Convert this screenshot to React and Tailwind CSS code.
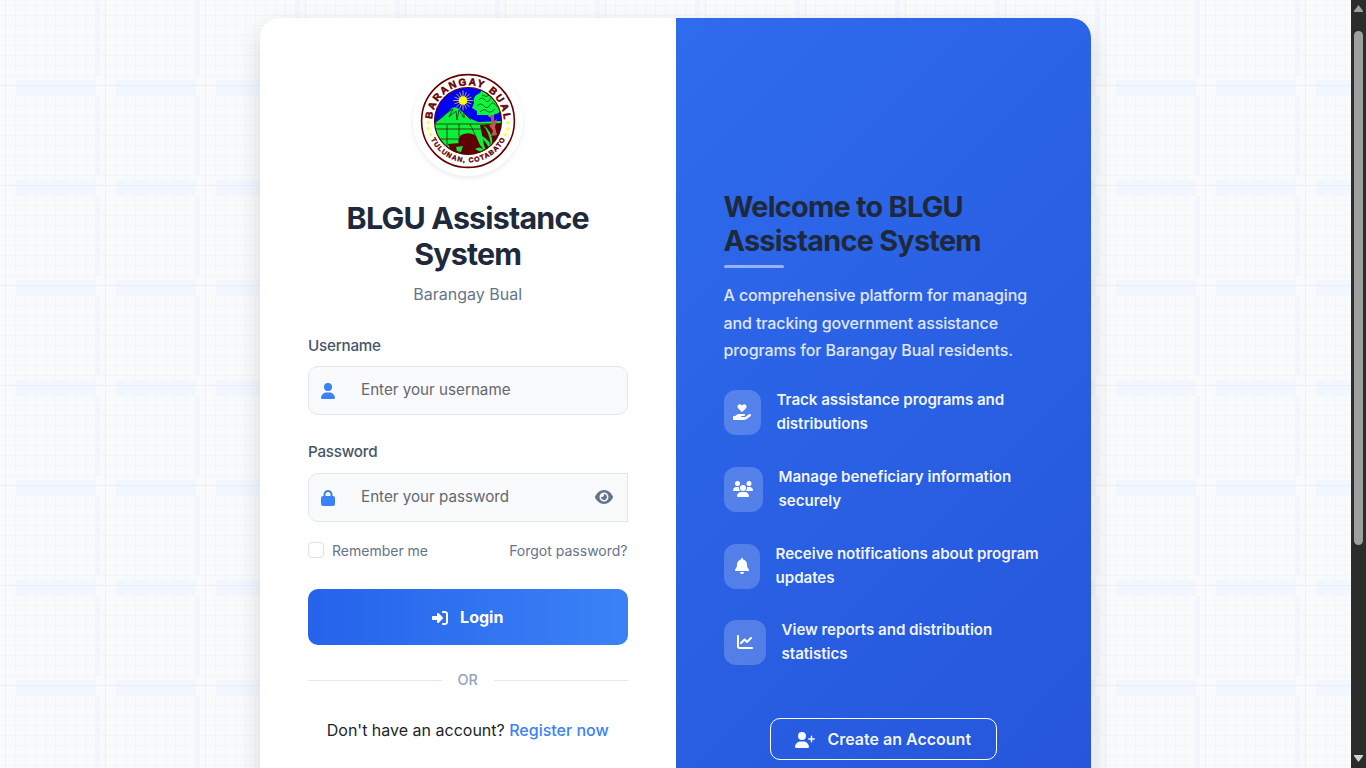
import {
  FaUser, FaLock, FaEye, FaRightToBracket, FaHandHoldingHeart, FaUsers, FaBell, FaChartLine, FaUserPlus,
} from "react-icons/fa6";

const features = [
  { Icon: FaHandHoldingHeart, box: "w-[37px]", icon: "w-[18px]", pitch: "h-[77px]", lines: ["Track assistance programs and", "distributions"] },
  { Icon: FaUsers, box: "w-[39px]", icon: "w-5", pitch: "h-[77px]", lines: ["Manage beneficiary information", "securely"] },
  { Icon: FaBell, box: "w-9", icon: "w-3.5", pitch: "h-[76px]", lines: ["Receive notifications about program", "updates"] },
  { Icon: FaChartLine, box: "w-[42px]", icon: "w-4", pitch: "h-12", lines: ["View reports and distribution", "statistics"] },
];

const MINOR = [15, 25, 35, 45, 55, 65, 75, 85, 95];

function GridBackground() {
  return (
    <svg className="absolute inset-0 h-full w-full" aria-hidden="true" shapeRendering="crispEdges">
      <defs>
        <pattern id="grid" width="100" height="100" patternUnits="userSpaceOnUse">
          <rect width="100" height="100" fill="#f9fafc" />
          {[5, ...MINOR].map((v) => (
            <g key={v} fill="#f3f5f9">
              <rect x={v} y="0" width="1" height="100" />
              <rect x="0" y={v} width="100" height="1" />
            </g>
          ))}
          <rect x="96" y="0" width="4" height="100" fill="#f2f5fd" />
          <rect x="0" y="76" width="16" height="20" fill="#f9fafc" />
          <rect x="96" y="76" width="4" height="20" fill="#f9fafc" />
          <rect x="16" y="80" width="80" height="16" fill="#f2f6fe" />
          <rect x="5" y="0" width="1" height="100" fill="#eeeffa" />
          <rect x="0" y="85" width="100" height="1" fill="#ebeefa" />
        </pattern>
      </defs>
      <rect width="100%" height="100%" fill="url(#grid)" />
    </svg>
  );
}

function Star({ x, y }) {
  return <path transform={`translate(${x} ${y})`} d="M0-2.4 .7-.7 2.4-.6 1.1.5 1.5 2.2 0 1.3-1.5 2.2-1.1.5-2.4-.6-.7-.7Z" fill="#ffff2a" />;
}

function Seal() {
  return (
    <svg viewBox="0 0 96 96" className="h-24 w-24" role="img" aria-label="Barangay Bual seal">
      <defs>
        <clipPath id="disc"><circle cx="48" cy="48" r="33.5" /></clipPath>
        <path id="arcTop" d="M12.2 48A35.8 35.8 0 0 1 83.8 48" />
        <path id="arcBottom" d="M6.6 48A41.4 41.4 0 0 0 89.4 48" />
      </defs>
      <circle cx="48" cy="48" r="46.4" fill="#fff" stroke="#650000" strokeWidth="1.6" />
      <g clipPath="url(#disc)">
        <rect width="96" height="96" fill="#0000f4" />
        <path d="M14 51 23 44 32 35Q36 33 39 36L49 45 58 49 82 48V84H14Z" fill="#0bf03b" />
        <path d="M14 50 25 41 33 36 29 44 36 38 37 47 39 37 44 45 44 40 51 47" fill="none" stroke="#153c22" strokeWidth=".9" />
        <path d="M13 51H84M14 56H70M14 66H44M27 52V80M39 51V64M14 75H38M50 51 56 64" fill="none" stroke="#3d1a00" strokeWidth=".8" />
        <path d="M60 52 82 50V75L68 83 64 72Z" fill="#590000" />
        <path d="M40 84 39 72Q37 66 41 62 50 58 56 63L60 72 70 84Z" fill="#600000" />
        <path d="M28 71 40 70 43 78 38 80 34 84Z" fill="#600000" />
        <path d="M36 74 43 73 41 79 37 78Z" fill="#0bea38" />
        <path d="M71 82Q69 70 57 61 67 64 71 72 69 59 63 52 74 59 72 75 77 68 83 67 74 72 73 82ZM55 76Q62 71 68 82 60 79 55 76" fill="#0aee35" />
        <path d="M54 30Q52 23 60 20 61 15 69 18 76 17 78 24 82 27 79 34 82 41 75 41 73 43 72 44H69L68 42 57 42 57 38 52 35Z" fill="#0ef53b" />
        <path d="M70 42H74L74 48 77 46 75 54 77 62 71 63 73 58 69 52 72 51Z" fill="#bd5858" />
        <path d="M59 27q3-4 6 0t6-2 6 3M57 33q4-4 7 0t6-1 7 2M60 39q4-4 7-1t8-2M62 22q4 3 8 0" fill="none" stroke="#126b35" strokeWidth="1" />
        <path d="M43 18v19M33.5 27.5h19M36.8 21.3l12.4 12.4M49.2 21.3 36.8 33.7M39.8 19.6l6.4 15.8M35 24.3l16 6.4M35 30.7l16-6.4M39.8 35.4l6.4-15.8" stroke="#e6dc50" strokeWidth=".8" strokeLinecap="round" />
        <circle cx="43" cy="27.5" r="4.3" fill="#ffff13" />
      </g>
      <circle cx="48" cy="48" r="33.5" fill="none" stroke="#650000" strokeWidth="1.2" />
      <g fill="#650000" className="font-['Liberation_Sans',sans-serif] font-bold">
        <text fontSize="10" textLength="109" lengthAdjust="spacing" stroke="#650000" strokeWidth=".5"><textPath href="#arcTop" startOffset="1.8">BARANGAY BUAL</textPath></text>
        <text fontSize="6.9" textLength="92" lengthAdjust="spacing" stroke="#650000" strokeWidth=".35"><textPath href="#arcBottom" startOffset="19">TULUNAN, COTABATO</textPath></text>
      </g>
      <Star x="8.2" y="49.5" /><Star x="8.2" y="55.5" /><Star x="10.7" y="61.5" />
      <Star x="87.8" y="49.5" /><Star x="87.8" y="55.5" /><Star x="85.3" y="61.5" />
    </svg>
  );
}

function LoginPanel() {
  return (
    <section className="flex w-1/2 flex-col items-stretch bg-white px-12 pt-12">
      <div className="flex h-[110px] w-[110px] items-center justify-center self-center rounded-full bg-white shadow-[0_2px_5px_rgba(0,0,0,0.08)]">
        <Seal />
      </div>
      <h1 className="mt-6 text-center text-[30.4px] leading-9 font-bold tracking-[-0.026em] text-[#1e293b]">BLGU Assistance<br />System</h1>
      <p className="mt-2.5 text-center text-base leading-6 text-[#64748b]">Barangay Bual</p>

      <label className="mt-7 text-[15.2px] leading-6 font-medium tracking-[-0.015em] text-[#475569]">Username</label>
      <div className="mt-2 flex h-[49px] items-center rounded-[10px] border border-[#e2e8f0] bg-[#f8fafc] pl-3">
        <FaUser className="mt-px h-4 w-3.5 text-[#3b82f6]" />
        <span className="mb-0.5 ml-[26px] text-[15.2px] leading-6 text-[#64686e]">Enter your username</span>
      </div>

      <label className="mt-[25px] text-[15.2px] leading-6 font-medium tracking-[-0.015em] text-[#475569]">Password</label>
      <div className="mt-[9px] flex h-[49px] items-center rounded-l-[10px] border border-[#e2e8f0] bg-[#f8fafc] pr-3.5 pl-3">
        <FaLock className="mt-px h-4 w-3.5 text-[#3b82f6]" />
        <span className="mb-0.5 ml-[26px] text-[15.2px] leading-6 text-[#64686e]">Enter your password</span>
        <FaEye className="mb-px ml-auto h-4 w-[18px] text-[#64748b]" />
      </div>

      <div className="mt-[18px] flex h-[22px] items-center text-sm text-[#64748b]">
        <span className="mr-2 mb-0.5 h-4 w-4 rounded-[4px] border border-[#dee2e6] bg-white" />
        <span>Remember me</span>
        <a className="ml-auto">Forgot password?</a>
      </div>

      <button className="mt-[27px] flex h-14 items-center justify-center rounded-[10px] bg-linear-to-r from-[#2563eb] to-[#3b82f6] text-base font-bold text-white">
        <FaRightToBracket className="mt-0.5 mr-3 h-4 w-4" />
        Login
      </button>

      <div className="mt-6 flex h-[22px] items-center gap-4 text-[14.4px] font-medium text-[#94a3b8]">
        <span className="h-px flex-1 bg-[#e2e8f0]" />OR<span className="h-px flex-1 bg-[#e2e8f0]" />
      </div>

      <p className="mt-[27px] text-center text-base leading-6 text-[#212529]">
        Don't have an account? <a className="font-medium text-[#3b82f6]">Register now</a>
      </p>
    </section>
  );
}

function WelcomePanel() {
  return (
    <section className="w-1/2 bg-linear-135 from-[#2f6bed] to-[#2555da] px-12 pt-[172px]">
      <h2 className="text-[28.8px] leading-[34px] font-bold tracking-[-0.025em] text-[#1e293b]">Welcome to BLGU<br />Assistance System</h2>
      <div className="mt-[7px] h-[3px] w-[60px] rounded-full bg-white/50" />
      <p className="mt-[14.4px] text-base leading-[27.4px] font-medium tracking-[-0.1px] whitespace-nowrap text-white/85">
        A comprehensive platform for managing<br />and tracking government assistance<br />programs for Barangay Bual residents.
      </p>
      <ul className="mt-[23.4px] flex flex-col">
        {features.map(({ Icon, box, icon, pitch, lines }) => (
          <li key={lines[0]} className={pitch}>
            <div className="flex h-12 items-center gap-4">
              <span className={`${box} flex h-[45px] shrink-0 items-center justify-center rounded-xl bg-white/20`}>
                <Icon className={`${icon} h-4 text-white`} />
              </span>
              <span className="text-[15.2px] leading-6 font-semibold tracking-[-0.07px] whitespace-nowrap text-white/95">{lines[0]}<br />{lines[1]}</span>
            </div>
          </li>
        ))}
      </ul>
      <div className="mt-[52px] flex justify-center">
        <button className="flex h-[42px] w-[227px] items-center justify-center rounded-[10px] border border-white text-base font-semibold text-white/95">
          <FaUserPlus className="mt-0.5 mr-3 h-4 w-5" />
          Create an Account
        </button>
      </div>
    </section>
  );
}

function Scrollbar() {
  return (
    <div className="flex h-full w-[15px] flex-col items-center bg-[#2c2c2c]">
      <svg viewBox="0 0 9 8" className="mt-[5px] h-2 w-[9px]"><path d="M4.5 0 9 6V7H0V6Z" fill="#9f9f9f" /></svg>
      <div className="mt-[18px] h-[514px] w-[9px] rounded-full bg-[#9f9f9f]" />
      <svg viewBox="0 0 9 8" className="mt-auto mb-1.5 h-2 w-[9px]"><path d="M4.5 8 9 2V1H0V2Z" fill="#d2d2d2" /></svg>
    </div>
  );
}

export default function App() {
  return (
    <div className="flex h-[768px] w-[1366px] overflow-hidden font-['Inter',sans-serif]">
      <main className="relative flex h-full w-[1351px] items-start justify-center overflow-hidden pt-[18px]">
        <GridBackground />
        <div className="relative flex h-[820px] w-[831px] shrink-0 overflow-hidden rounded-[20px] shadow-[0_10px_25px_rgba(0,0,0,0.13)]">
          <LoginPanel />
          <WelcomePanel />
        </div>
      </main>
      <Scrollbar />
    </div>
  );
}
